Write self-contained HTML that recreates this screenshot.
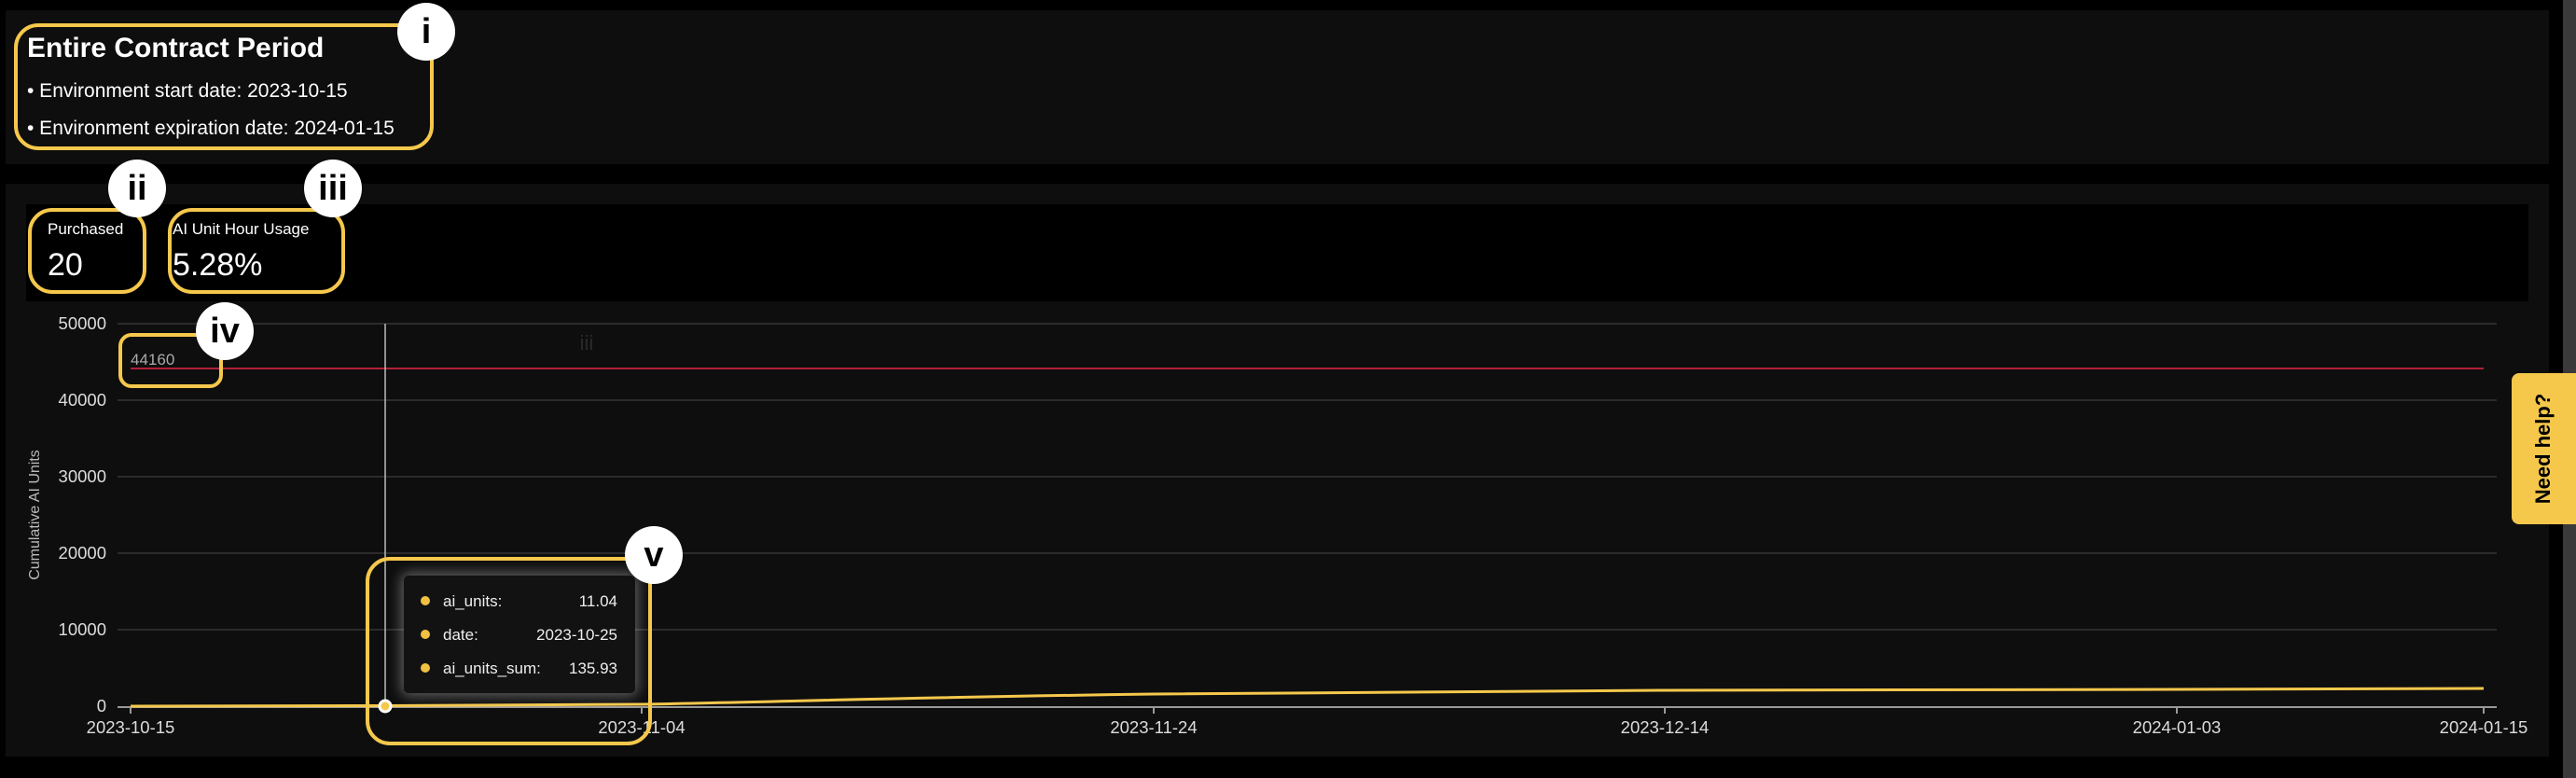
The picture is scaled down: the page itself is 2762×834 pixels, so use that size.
<!DOCTYPE html>
<html><head><meta charset="utf-8"><style>
*{margin:0;padding:0;box-sizing:border-box}
body{width:2762px;height:834px;background:#000;position:relative;overflow:hidden;font-family:"Liberation Sans",sans-serif;color:#fff}
.a{position:absolute}
.box{position:absolute;border:4px solid #f5c84c;border-radius:26px}
.badge{position:absolute;width:62px;height:62px;border-radius:50%;background:#fff;color:#000;font-weight:bold;font-size:38px;display:flex;align-items:center;justify-content:center;line-height:1}
</style></head><body>
<div class="a" style="left:6px;top:11px;width:2727px;height:165px;background:#0e0e0e"></div>
<div class="a" style="left:6px;top:197px;width:2727px;height:614px;background:#0e0e0e"></div>
<div class="a" style="left:28px;top:219px;width:2683px;height:104px;background:#000"></div>
<div class="a" style="left:2748px;top:0;width:14px;height:834px;background:#3a3a3a"></div>

<div class="a" style="left:29px;top:35px;font-size:30px;font-weight:bold">Entire Contract Period</div>
<div class="a" style="left:29px;top:86px;font-size:21px">• Environment start date: 2023-10-15</div>
<div class="a" style="left:29px;top:126px;font-size:21px">• Environment expiration date: 2024-01-15</div>
<div class="box" style="left:15px;top:25px;width:450px;height:136px"></div>
<div class="badge" style="left:426px;top:3px">i</div>

<div class="a" style="left:51px;top:236px;font-size:17px">Purchased</div>
<div class="a" style="left:51px;top:265px;font-size:34px;font-weight:300">20</div>
<div class="box" style="left:30px;top:223px;width:127px;height:92px"></div>
<div class="badge" style="left:116px;top:171px">ii</div>
<div class="a" style="left:185px;top:236px;font-size:17px">AI Unit Hour Usage</div>
<div class="a" style="left:185px;top:265px;font-size:34px">5.28%</div>
<div class="box" style="left:180px;top:223px;width:190px;height:92px"></div>
<div class="badge" style="left:326px;top:171px">iii</div>

<svg class="a" style="left:0;top:0" width="2762" height="834">
<g stroke="#2b2b2b" stroke-width="2">
<line x1="126" y1="347" x2="2677" y2="347"/><line x1="126" y1="429" x2="2677" y2="429"/>
<line x1="126" y1="511" x2="2677" y2="511"/><line x1="126" y1="593" x2="2677" y2="593"/>
<line x1="126" y1="675" x2="2677" y2="675"/></g>
<g fill="#ddd" font-size="18.5" text-anchor="end" font-family="Liberation Sans">
<text x="114" y="353">50000</text><text x="114" y="435">40000</text><text x="114" y="517">30000</text>
<text x="114" y="599">20000</text><text x="114" y="681">10000</text><text x="114" y="763">0</text></g>
<text x="0" y="0" transform="translate(42,552) rotate(-90)" fill="#bbb" font-size="16" text-anchor="middle" font-family="Liberation Sans">Cumulative AI Units</text>
<text x="629" y="375" fill="#2a2a2a" font-size="22" text-anchor="middle" font-family="Liberation Sans">iii</text>
<line x1="140" y1="395" x2="2663" y2="395" stroke="#b0213a" stroke-width="2"/>
<text x="140" y="391" fill="#aaa" font-size="17" font-family="Liberation Sans">44160</text>
<line x1="413" y1="347" x2="413" y2="757" stroke="#bbb" stroke-width="1.5"/>
<line x1="126" y1="758" x2="2677" y2="758" stroke="#999" stroke-width="2"/>
<g stroke="#999" stroke-width="2"><line x1="140" y1="758" x2="140" y2="765"/><line x1="688" y1="758" x2="688" y2="765"/><line x1="1237" y1="758" x2="1237" y2="765"/><line x1="1785" y1="758" x2="1785" y2="765"/><line x1="2334" y1="758" x2="2334" y2="765"/><line x1="2663" y1="758" x2="2663" y2="765"/></g>
<g fill="#ddd" font-size="18.5" text-anchor="middle" font-family="Liberation Sans">
<text x="140" y="786">2023-10-15</text><text x="688" y="786">2023-11-04</text><text x="1237" y="786">2023-11-24</text>
<text x="1785" y="786">2023-12-14</text><text x="2334" y="786">2024-01-03</text><text x="2663" y="786">2024-01-15</text></g>
<path d="M140 757 L413 756.5 L688 755 C850 752 950 748 1237 744 C1500 741 1700 740 1785 740 L2334 739 L2663 738" fill="none" stroke="#f5c84c" stroke-width="3"/>
<circle cx="413" cy="757" r="6" fill="#f5c84c" stroke="#fff" stroke-width="3"/>
</svg>

<div class="a" style="left:433px;top:617px;width:248px;height:126px;background:#121212;border-radius:5px;box-shadow:0 0 14px 3px rgba(255,255,255,0.35);font-size:17px;color:#eee">
<div class="a" style="left:18px;top:22px;width:10px;height:10px;border-radius:50%;background:#f0c040"></div>
<div class="a" style="left:18px;top:58px;width:10px;height:10px;border-radius:50%;background:#f0c040"></div>
<div class="a" style="left:18px;top:94px;width:10px;height:10px;border-radius:50%;background:#f0c040"></div>
<div class="a" style="left:42px;top:18px">ai_units:</div><div class="a" style="right:19px;top:18px">11.04</div>
<div class="a" style="left:42px;top:54px">date:</div><div class="a" style="right:19px;top:54px">2023-10-25</div>
<div class="a" style="left:42px;top:90px">ai_units_sum:</div><div class="a" style="right:19px;top:90px">135.93</div>
</div>
<div class="box" style="left:392px;top:597px;width:307px;height:202px"></div>
<div class="badge" style="left:670px;top:564px">v</div>
<div class="box" style="left:127px;top:357px;width:112px;height:59px;border-radius:14px"></div>
<div class="badge" style="left:210px;top:324px">iv</div>

<div class="a" style="left:2693px;top:400px;width:69px;height:162px;background:#f5c84c;border-radius:8px 0 0 8px"></div>
<div class="a" style="left:2727px;top:481px;transform:translate(-50%,-50%) rotate(-90deg);font-size:22px;font-weight:bold;color:#000;white-space:nowrap">Need help?</div>
</body></html>
